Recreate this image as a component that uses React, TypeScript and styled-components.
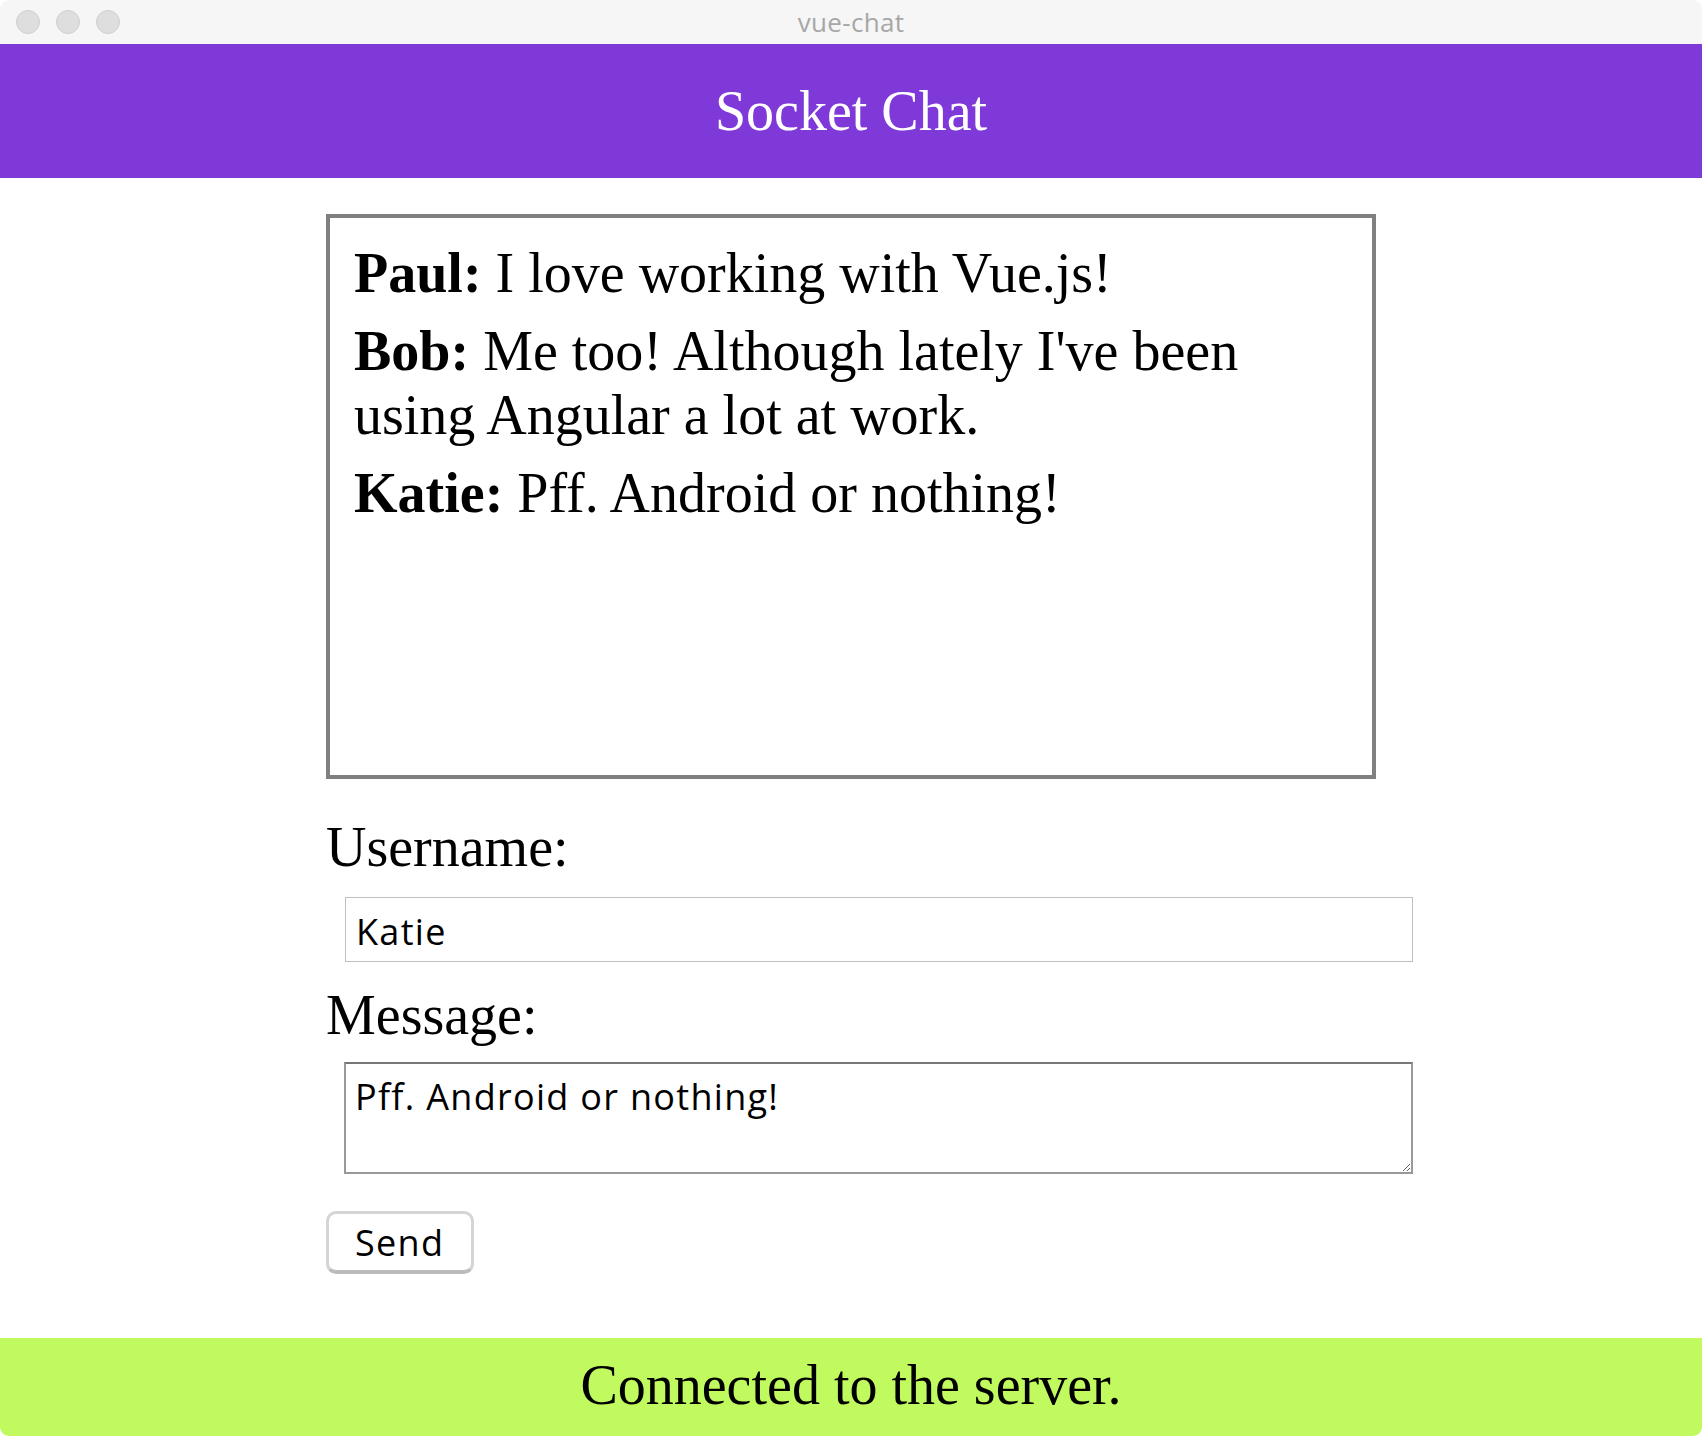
import * as React from "react";
import styled, { createGlobalStyle } from "styled-components";

const GlobalStyle = createGlobalStyle`
  html, body {
    margin: 0;
    padding: 0;
    background: #ffffff;
  }
`;

const Window = styled.div`
  width: 1702px;
  height: 1436px;
  display: flex;
  flex-direction: column;
  border-radius: 9px;
  overflow: hidden;
  background: #ffffff;
  font-family: "Liberation Serif", "Times New Roman", serif;
`;

const TitleBar = styled.div`
  position: relative;
  height: 44px;
  flex: none;
  display: flex;
  align-items: center;
  justify-content: center;
  background: #f6f6f6;
  color: #a7a7a7;
  font-family: "Open Sans", "Noto Sans", sans-serif;
  font-size: 26px;
  letter-spacing: 0.3px;
`;

const Lights = styled.div`
  position: absolute;
  left: 16px;
  top: 10px;
  display: flex;
  gap: 16px;
`;

const Light = styled.span`
  width: 22px;
  height: 22px;
  border-radius: 50%;
  background: #dedede;
  border: 1px solid #cfcfcf;
`;

const Header = styled.header`
  height: 134px;
  flex: none;
  display: flex;
  align-items: center;
  justify-content: center;
  background: #7f39d9;
  color: #ffffff;
  font-size: 56px;
  line-height: 64px;
`;

const Main = styled.main`
  width: 1050px;
  margin: 36px auto 0;
  display: flex;
  flex-direction: column;
  align-items: flex-start;
`;

const ChatBox = styled.div`
  box-sizing: border-box;
  width: 1050px;
  height: 565px;
  border: 4px solid #808080;
  padding: 23px 24px;
  display: flex;
  flex-direction: column;
  gap: 14px;
`;

const Message = styled.p`
  margin: 0;
  font-size: 56px;
  line-height: 64px;
  color: #000000;
`;

const Label = styled.label<{ $gap: number }>`
  display: block;
  margin-top: ${(p) => p.$gap}px;
  font-size: 56px;
  line-height: 64px;
  color: #000000;
`;

const fieldFont = `
  font-family: "Open Sans", "Noto Sans", sans-serif;
  font-size: 36px;
  letter-spacing: 1.3px;
  color: #000000;
`;

const TextInput = styled.input`
  box-sizing: border-box;
  width: 1068px;
  height: 65px;
  margin: 18px 0 0 19px;
  padding: 4px 10px 0;
  border: 1px solid #c0c0c0;
  border-radius: 0;
  outline: none;
  ${fieldFont}
`;

const TextArea = styled.textarea`
  box-sizing: border-box;
  display: block;
  width: 1069px;
  height: 112px;
  margin: 15px 0 0 18px;
  padding: 8px 9px 4px;
  border: 2px solid #999999;
  border-top-color: #777777;
  border-radius: 0;
  outline: none;
  resize: both;
  line-height: 49px;
  ${fieldFont}
`;

const SendButton = styled.button`
  box-sizing: border-box;
  width: 148px;
  height: 63px;
  margin-top: 37px;
  padding: 0 0 0 26px;
  text-align: left;
  background: #ffffff;
  border: 3px solid #d5d5d5;
  border-bottom: 4px solid #bcbcbc;
  border-radius: 10px;
  cursor: pointer;
  ${fieldFont}
`;

const StatusBar = styled.footer`
  margin-top: auto;
  height: 98px;
  flex: none;
  box-sizing: border-box;
  padding-top: 15px;
  text-align: center;
  background: #c1fa5f;
  color: #000000;
  font-size: 56px;
  line-height: 64px;
`;

const messages = [
  { user: "Paul", text: "I love working with Vue.js!" },
  { user: "Bob", text: "Me too! Although lately I've been using Angular a lot at work." },
  { user: "Katie", text: "Pff. Android or nothing!" },
];

export default function App() {
  const [username, setUsername] = React.useState("Katie");
  const [draft, setDraft] = React.useState("Pff. Android or nothing!");

  return (
    <>
      <GlobalStyle />
      <Window>
        <TitleBar>
          <Lights>
            <Light />
            <Light />
            <Light />
          </Lights>
          vue-chat
        </TitleBar>

        <Header>Socket Chat</Header>

        <Main>
          <ChatBox>
            {messages.map((m, i) => (
              <Message key={i}>
                <b>{m.user}:</b> {m.text}
              </Message>
            ))}
          </ChatBox>

          <Label $gap={36} htmlFor="username">Username:</Label>
          <TextInput
            id="username"
            value={username}
            onChange={(e) => setUsername(e.target.value)}
          />

          <Label $gap={21} htmlFor="message">Message:</Label>
          <TextArea
            id="message"
            value={draft}
            onChange={(e) => setDraft(e.target.value)}
          />

          <SendButton>Send</SendButton>
        </Main>

        <StatusBar>Connected to the server.</StatusBar>
      </Window>
    </>
  );
}
